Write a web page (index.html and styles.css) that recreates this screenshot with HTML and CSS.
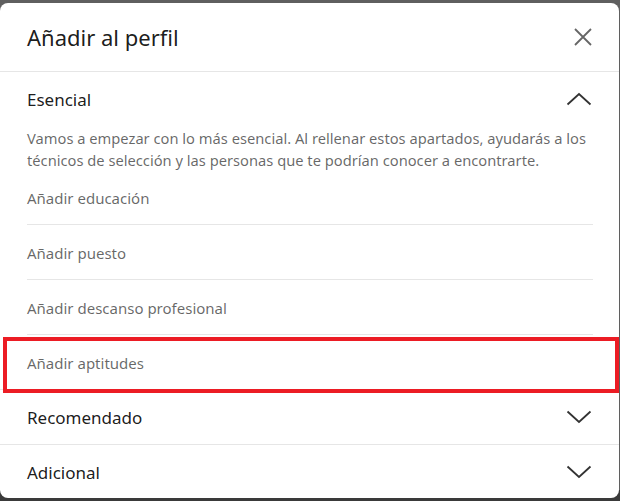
FILE: index.html
```html
<!DOCTYPE html>
<html lang="es">
  <head>
    <meta charset="UTF-8" />
    <meta name="viewport" content="width=device-width, initial-scale=1.0" />
    <title>Añadir al perfil</title>
    <link rel="stylesheet" href="styles.css">
  </head>
  <body>
    <div class="modal">
      <div class="modal-header">
        <h1>Añadir al perfil</h1>
        <button class="close-btn" aria-label="Cerrar">
          <svg width="24" height="24" viewBox="0 0 24 24">
            <path d="M4 4 L20 20 M20 4 L4 20" stroke="#666" stroke-width="1.8" fill="none" />
          </svg>
        </button>
      </div>

      <div class="section">
        <div class="section-header">
          <h2>Esencial</h2>
          <svg class="chevron" width="26" height="14" viewBox="0 0 26 14">
            <path d="M1.5 12.5 L13 2 L24.5 12.5" stroke="#333" stroke-width="1.8" fill="none" />
          </svg>
        </div>
        <p class="section-desc">
          Vamos a empezar con lo más esencial. Al rellenar estos apartados, ayudarás a los
          técnicos de selección y las personas que te podrían conocer a encontrarte.
        </p>
        <ul class="item-list">
          <li class="item">Añadir educación</li>
          <li class="item">Añadir puesto</li>
          <li class="item">Añadir descanso profesional</li>
          <li class="item highlighted">Añadir aptitudes</li>
        </ul>
      </div>

      <div class="section">
        <div class="section-header">
          <h2>Recomendado</h2>
          <svg class="chevron" width="26" height="14" viewBox="0 0 26 14">
            <path d="M1.5 1.5 L13 12 L24.5 1.5" stroke="#333" stroke-width="1.8" fill="none" />
          </svg>
        </div>
      </div>

      <div class="section last">
        <div class="section-header">
          <h2>Adicional</h2>
          <svg class="chevron" width="26" height="14" viewBox="0 0 26 14">
            <path d="M1.5 1.5 L13 12 L24.5 1.5" stroke="#333" stroke-width="1.8" fill="none" />
          </svg>
        </div>
      </div>
    </div>
  </body>
</html>
```

FILE: styles.css
```css
body {
  margin: 0;
  padding-top: 3px;
  height: 498px;
  font-family: "Noto Sans", "Open Sans", sans-serif;
  background: linear-gradient(#5f5f5f 0, #5f5f5f 490px, #3a3a3a 490px);
  overflow: hidden;
}

.modal {
  width: 619px;
  height: 495px;
  background-color: #fff;
  border-radius: 8px;
  overflow: hidden;
}

.modal-header {
  display: flex;
  align-items: center;
  justify-content: space-between;
  height: 68px;
  padding: 0 24px 0 27px;
  border-bottom: 1px solid #e6e6e6;
}

h1 {
  margin: 0;
  font-size: 22px;
  font-weight: 400;
  color: rgba(0, 0, 0, 0.9);
}

.close-btn {
  display: flex;
  padding: 0;
  background: none;
  border: none;
  cursor: pointer;
}

.section {
  border-bottom: 1px solid #e6e6e6;
}

.section.last {
  border-bottom: none;
}

.section-header {
  display: flex;
  align-items: center;
  justify-content: space-between;
  height: 54px;
  padding: 0 27px 0 27px;
}

h2 {
  margin: 0;
  font-size: 17px;
  font-weight: 400;
  color: rgba(0, 0, 0, 0.9);
}

.section-desc {
  margin: 1px 27px 0;
  font-size: 14.7px;
  line-height: 22px;
  color: rgba(0, 0, 0, 0.6);
}

.item-list {
  list-style: none;
  margin: -1px 26px 0 27px;
  padding: 0;
}

.item {
  position: relative;
  padding: 18px 0 16px;
  line-height: 20px;
  font-size: 15px;
  color: rgba(0, 0, 0, 0.6);
  border-bottom: 1px solid #e6e6e6;
}

.item:last-child {
  border-bottom: none;
}

.highlighted::after {
  content: "";
  position: absolute;
  top: 2px;
  bottom: -4px;
  left: -24px;
  right: -26px;
  border: 4px solid #ec1c24;
}
```
